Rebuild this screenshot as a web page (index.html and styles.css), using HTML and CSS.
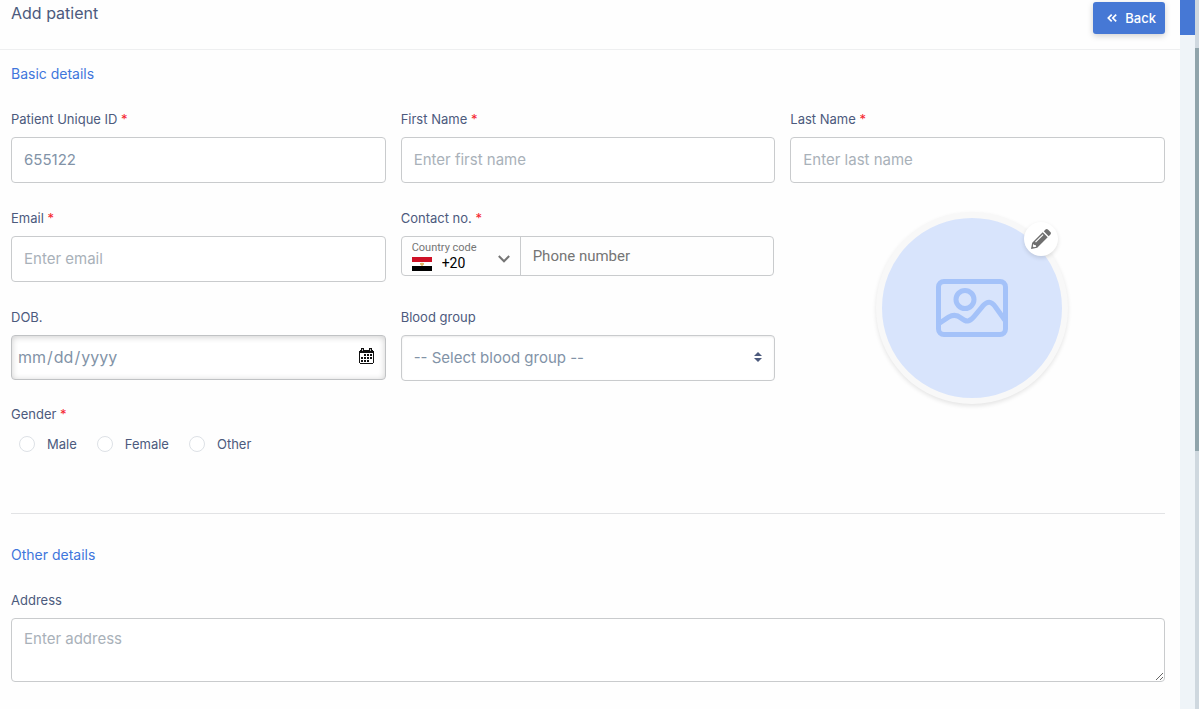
FILE: index.html
```html
<!DOCTYPE html>
<html lang="en">
<head>
<meta charset="utf-8">
<meta name="viewport" content="width=device-width, initial-scale=1">
<title>Add patient</title>
<link rel="stylesheet" href="styles.css">
</head>
<body>
<div class="app">
  <main class="panel">
    <header class="panel-header">
      <h1 class="title">Add patient</h1>
      <button class="back" type="button">
        <svg width="10" height="8" viewBox="0 0 10 8" fill="none" stroke="currentColor" stroke-width="1.7" aria-hidden="true"><path d="M4.7.6 1.3 4l3.400 3.400M9.200.6 5.800 4l3.400 3.400"/></svg>
        Back
      </button>
    </header>
    <form class="form">
      <h2 class="section-title">Basic details</h2>
      <div class="grid">
        <div class="field">
          <label class="label" for="uid">Patient Unique ID <span class="required">*</span></label>
          <input class="control" id="uid" type="text" value="655122">
        </div>
        <div class="field">
          <label class="label" for="first">First Name <span class="required">*</span></label>
          <input class="control" id="first" type="text" placeholder="Enter first name">
        </div>
        <div class="field">
          <label class="label" for="last">Last Name <span class="required">*</span></label>
          <input class="control" id="last" type="text" placeholder="Enter last name">
        </div>
        <div class="field">
          <label class="label" for="email">Email <span class="required">*</span></label>
          <input class="control" id="email" type="email" placeholder="Enter email">
        </div>
        <div class="field">
          <label class="label" for="phone">Contact no. <span class="required">*</span></label>
          <div class="phone">
            <div class="country">
              <label class="country-label" for="country">Country code</label>
              <svg class="flag" viewBox="0 0 20 14" aria-hidden="true"><path fill="#fff" d="M0 0h20v14H0z"/><path fill="#ce1126" d="M0 0h20v5H0z"/><path d="M0 9h20v5H0z"/><path fill="#dfb765" d="M8 6h1.300l.7-.5.7.5H12v1.500l-1 .5v.7H9V8l-1-.5z"/></svg>
              <select class="country-select" id="country"><option>+20</option></select>
              <svg class="chevron" viewBox="0 0 12 8" fill="none" stroke="#757575" stroke-width="2" aria-hidden="true"><path d="m.8 1 5.200 5.300L11.200 1"/></svg>
            </div>
            <input class="phone-input" id="phone" type="tel" placeholder="Phone number">
          </div>
        </div>
        <div class="photo-cell">
          <div class="photo">
            <svg class="photo-icon" viewBox="0 0 72 58" fill="none" stroke="#a4c2f9" stroke-width="5" aria-hidden="true"><rect x="2.500" y="2.500" width="67" height="53" rx="5.500"/><circle cx="29" cy="20.500" r="9"/><path d="m3 44.500 9.500-6.300c5-3 8.500-2.500 12.500.8 5.500 4.500 8.500 4 13-1.300l8.500-10.400c5-5.500 8.500-5.500 13 .7L69.500 42"/></svg>
            <button class="edit" type="button" aria-label="Edit photo">
              <svg width="20" height="20" viewBox="0 0 20 20" aria-hidden="true"><path fill="#6f6f6f" d="m0 20 1.200-6.200L11.700 3.300l5 5L6.200 18.800zM12.800 2.200 14.500.6c.7-.7 1.700-.7 2.400 0l2.500 2.500c.7.7.7 1.700 0 2.400l-1.700 1.700z"/><path stroke="#fff" stroke-width="1.200" fill="none" d="m4.500 13.200 7.600-7.600"/><path fill="#fff" d="m2.300 14.900-.5 2.500 1 .9 2.400-.5-.3-1.500-1.500-.3z"/></svg>
            </button>
          </div>
        </div>
        <div class="field">
          <label class="label" for="dob">DOB.</label>
          <div class="date">
            <input class="control date-input" id="dob" type="date">
            <svg class="calendar" viewBox="0 0 15 16" shape-rendering="crispEdges" aria-hidden="true"><path fill="#111" fill-rule="evenodd" d="M1 2h13v1h1v12h-1v1H1v-1H0V3h1zM1 5v10h13V5z"/><path fill="#111" d="M2 0h3v4H2zM10 0h3v4h-3z"/><path fill="#bbb" d="M3 1h1v2H3zM11 1h1v2h-1z"/><path fill="#111" d="M5 6h2v2H5zM8 6h2v2H8zM11 6h2v2h-2zM2 9h2v2H2zM5 9h2v2H5zM8 9h2v2H8zM11 9h2v2h-2zM2 12h2v2H2zM5 12h2v2H5zM8 12h2v2H8z"/></svg>
          </div>
        </div>
        <div class="field">
          <label class="label" for="blood">Blood group</label>
          <div class="select-wrap">
            <select class="control blood" id="blood"><option>-- Select blood group --</option></select>
            <svg class="sort" viewBox="0 0 8 10" fill="#4c5a7d" aria-hidden="true"><path d="M4 0l4 4H0zM0 6h8L4 10z"/></svg>
          </div>
        </div>
      </div>
      <fieldset class="gender">
        <legend class="label">Gender <span class="required">*</span></legend>
        <div class="radios">
          <label class="radio"><input type="radio" name="gender">Male</label>
          <label class="radio"><input type="radio" name="gender">Female</label>
          <label class="radio"><input type="radio" name="gender">Other</label>
        </div>
      </fieldset>
      <hr class="divider">
      <h2 class="section-title">Other details</h2>
      <div class="field">
        <label class="label" for="address">Address</label>
        <textarea class="control address" id="address" placeholder="Enter address"></textarea>
      </div>
    </form>
  </main>
  <div class="gutter"></div>
  <div class="track"><div class="thumb"></div></div>
</div>
</body>
</html>
```

FILE: styles.css
```css
* { box-sizing: border-box; }
body {
  margin: 0;
  font-family: Inter, "Open Sans", sans-serif;
  font-size: 13px;
  color: #4c5a7d;
  background: #fefefe;
}
button, input, select, textarea { font: inherit; color: inherit; }
.app { display: flex; min-height: 100vh; }
.panel { flex: 1; min-width: 0; background: #fefefe; }
.gutter {
  width: 15px;
  background: linear-gradient(#4678d5 35px, #eff4f8 35px);
}
.track { width: 4px; padding-top: 48px; background: #cfd8df; }
.thumb { height: 403px; background: #90a4ab; }

.panel-header {
  display: flex;
  justify-content: space-between;
  align-items: flex-start;
  height: 50px;
  padding: 2px 15px 0 11px;
  border-bottom: 1px solid #eeeff0;
}
.title { margin: 0; font-size: 16px; font-weight: 400; line-height: 22px; }
.back {
  display: flex;
  align-items: center;
  gap: 8px;
  height: 32px;
  padding: 0 9px 0 14px;
  border: 0;
  border-radius: 3px;
  background: #4678d5;
  color: #fff;
  font-weight: 500;
  box-shadow: 0 2px 6px rgba(0, 0, 0, 0.18);
}

.form { padding: 14px 15px 27px 11px; }
.section-title {
  margin: 0 0 25px;
  font-size: 14px;
  font-weight: 400;
  line-height: 20px;
  color: #3f76dc;
}
.grid {
  display: grid;
  grid-template-columns: repeat(3, minmax(0, 1fr));
  column-gap: 15px;
  row-gap: 25px;
}
.label {
  display: block;
  margin-bottom: 8px;
  padding: 0;
  line-height: 20px;
}
.required { color: #f5222d; }
.control {
  display: block;
  width: 100%;
  height: 46px;
  padding: 0 12px 2px;
  border: 1px solid #c9cbcd;
  border-radius: 4px;
  background: #fff;
  color: #8293a7;
  font-size: 15px;
}
.control::placeholder { color: #a9b1b9; opacity: 1; }

.phone {
  display: flex;
  height: 40px;
  margin-right: 1px;
  border: 1px solid #c9cbcd;
  border-radius: 4px;
}
.country {
  position: relative;
  width: 119px;
  border-right: 1px solid #c9cbcd;
  font-family: Roboto, sans-serif;
}
.country-label {
  position: absolute;
  top: 5px;
  left: 10px;
  font-size: 11px;
  line-height: 12px;
  color: #757575;
}
.country-select {
  width: 100%;
  height: 38px;
  padding: 14px 0 0 40px;
  border: 0;
  appearance: none;
  background: transparent;
  color: #000;
  font-size: 14px;
}
.flag { position: absolute; left: 10px; top: 20px; width: 20px; height: 14px; }
.chevron { position: absolute; right: 10px; top: 18px; width: 12px; height: 8px; }
.phone-input {
  flex: 1;
  min-width: 0;
  padding: 0 12px;
  border: 0;
  background: transparent;
  font-family: Roboto, sans-serif;
  font-size: 15px;
}
.phone-input::placeholder { color: #757575; opacity: 1; }

.photo-cell {
  grid-column: 3;
  grid-row: 2 / span 2;
  display: flex;
  justify-content: center;
  align-items: flex-start;
  height: 172px;
  padding: 4px 12px 0 0;
}
.photo {
  position: relative;
  display: flex;
  justify-content: center;
  align-items: center;
  flex: none;
  width: 192px;
  height: 192px;
  border: 6px solid #f8f8f8;
  border-radius: 50%;
  background: #d8e4fc;
  box-shadow: 0 2px 4px rgba(0, 0, 0, 0.1);
}
.photo-icon { width: 72px; height: 58px; }
.edit {
  position: absolute;
  top: 4px;
  right: 4px;
  display: flex;
  align-items: center;
  justify-content: center;
  width: 34px;
  height: 34px;
  padding: 0;
  border: 0;
  border-radius: 50%;
  background: #fff;
  box-shadow: 0 2px 4px rgba(0, 0, 0, 0.12);
}

.date, .select-wrap { position: relative; }
.date-input {
  height: 45px;
  padding: 0 5px 2px;
  border-color: #c0c2c4;
  font-size: 16px;
  box-shadow: inset 0 1px 6px rgba(0, 0, 0, 0.2);
}
.date-input::-webkit-calendar-picker-indicator { opacity: 0; }
.calendar {
  position: absolute;
  right: 12px;
  top: 13px;
  width: 15px;
  height: 16px;
  pointer-events: none;
}
.blood {
  appearance: none;
  box-shadow: inset 0 1px 2px rgba(0, 0, 0, 0.08);
}
.sort {
  position: absolute;
  right: 13px;
  top: 17px;
  width: 8px;
  height: 10px;
  pointer-events: none;
}

.gender { margin: 23px 0 0; padding: 0; border: 0; min-width: 0; }
.radios { display: flex; gap: 20px; height: 24px; padding-left: 8px; }
.radio {
  display: flex;
  align-items: center;
  gap: 12px;
}
.radio input {
  appearance: none;
  width: 16px;
  height: 16px;
  margin: 0;
  border: 1px solid #dde1e6;
  border-radius: 50%;
  background: #fff;
}
.divider {
  height: 1px;
  margin: 57px 0 31px;
  border: 0;
  background: #e2e3e5;
}
.address { height: 64px; padding: 10px 12px; line-height: 20px; resize: vertical; }
```
